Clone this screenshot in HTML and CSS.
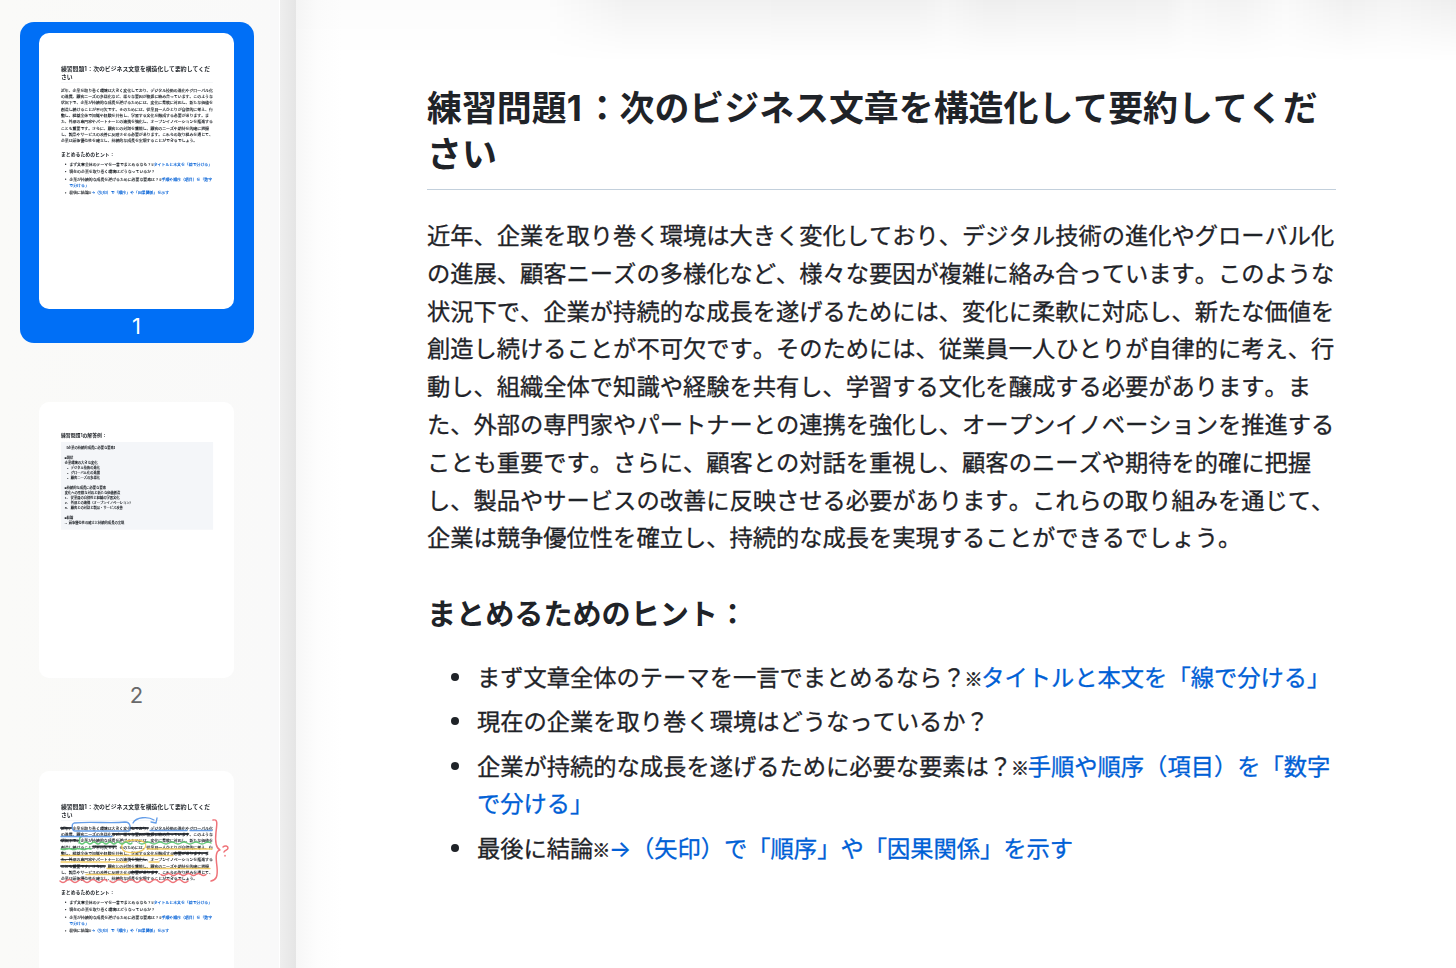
FILE: index.html
```html
<!DOCTYPE html>
<html lang="ja">
<head>
  <meta charset="UTF-8" />
  <meta name="viewport" content="width=device-width, initial-scale=1.0" />
  <title>練習問題1</title>
  <link rel="stylesheet" href="styles.css">
</head>
<body>
  <!-- Sidebar -->
  <aside class="sidebar">
    <div class="thumb selected">
      <div class="sheet">
        <div class="page">
          <h2>練習問題<span class="digit">1</span>：次のビジネス文章を構造化して要約してくだ<br>さい</h2>
          <p>近年、企業を取り巻く環境は大きく変化しており、デジタル技術の進化やグローバル化<br>の進展、顧客ニーズの多様化など、様々な要因が複雑に絡み合っています。このような<br>状況下で、企業が持続的な成長を遂げるためには、変化に柔軟に対応し、新たな価値を<br>創造し続けることが不可欠です。そのためには、従業員一人ひとりが自律的に考え、行<br>動し、組織全体で知識や経験を共有し、学習する文化を醸成する必要があります。ま<br>た、外部の専門家やパートナーとの連携を強化し、オープンイノベーションを推進する<br>ことも重要です。さらに、顧客との対話を重視し、顧客のニーズや期待を的確に把握<br>し、製品やサービスの改善に反映させる必要があります。これらの取り組みを通じて、<br>企業は競争優位性を確立し、持続的な成長を実現することができるでしょう。</p>
          <h3>まとめるためのヒント：</h3>
          <ul>
            <li>まず文章全体のテーマを一言でまとめるなら？<span class="mark">※</span><a>タイトルと本文を「線で分ける」</a></li>
            <li>現在の企業を取り巻く環境はどうなっているか？</li>
            <li>企業が持続的な成長を遂げるために必要な要素は？<span class="mark">※</span><a>手順や順序（項目）を「数字<br>で分ける」</a></li>
            <li>最後に結論<span class="mark">※</span><a><span class="arrow">→</span>（矢印）で「順序」や「因果関係」を示す</a></li>
          </ul>
        </div>
      </div>
      <span class="number">1</span>
    </div>

    <div class="thumb">
      <div class="sheet">
        <div class="page answer">
          <h3>練習問題1の解答例：</h3>
          <pre>【企業の持続的成長に必要な要素】

■現状
企業環境の大きな変化
 - デジタル技術の進化
 - グローバル化の進展
 - 顧客ニーズの多様化

■持続的な成長に必要な要素
変化への柔軟な対応と新たな価値創造
1. 従業員の自律性と組織の学習文化
2. 外部との連携（オープンイノベーション）
3. 顧客との対話と製品・サービス改善

■結論
→ 競争優位性の確立と持続的成長の実現</pre>
        </div>
      </div>
      <span class="number">2</span>
    </div>

    <div class="thumb">
      <div class="sheet">
        <div class="page">
          <h2>練習問題<span class="digit">1</span>：次のビジネス文章を構造化して要約してくだ<br>さい</h2>
          <p>近年、企業を取り巻く環境は大きく変化しており、デジタル技術の進化やグローバル化<br>の進展、顧客ニーズの多様化など、様々な要因が複雑に絡み合っています。このような<br>状況下で、企業が持続的な成長を遂げるためには、変化に柔軟に対応し、新たな価値を<br>創造し続けることが不可欠です。そのためには、従業員一人ひとりが自律的に考え、行<br>動し、組織全体で知識や経験を共有し、学習する文化を醸成する必要があります。ま<br>た、外部の専門家やパートナーとの連携を強化し、オープンイノベーションを推進する<br>ことも重要です。さらに、顧客との対話を重視し、顧客のニーズや期待を的確に把握<br>し、製品やサービスの改善に反映させる必要があります。これらの取り組みを通じて、<br>企業は競争優位性を確立し、持続的な成長を実現することができるでしょう。</p>
          <h3>まとめるためのヒント：</h3>
          <ul>
            <li>まず文章全体のテーマを一言でまとめるなら？<span class="mark">※</span><a>タイトルと本文を「線で分ける」</a></li>
            <li>現在の企業を取り巻く環境はどうなっているか？</li>
            <li>企業が持続的な成長を遂げるために必要な要素は？<span class="mark">※</span><a>手順や順序（項目）を「数字<br>で分ける」</a></li>
            <li>最後に結論<span class="mark">※</span><a><span class="arrow">→</span>（矢印）で「順序」や「因果関係」を示す</a></li>
          </ul>
        </div>
        <!-- Pen marks -->
        <svg class="ink" viewBox="0 0 195 276" fill="none" stroke-linecap="round" stroke-linejoin="round">
          <g stroke="#f3c74f" stroke-width="1.3" opacity=".85">
            <path d="M108 78H173M22 84.5H134M22 91H88M110 91H120M68 97.5H171M47 103.5H90"/>
            <path d="M84 79c-4-6 2-10 12-10s13 5 9 9-17 5-21 1Z"/>
          </g>
          <g stroke="#62c776" stroke-width="1.4">
            <path d="M42 66h-1l-1 6M41 72q2 2 4 0t4 0 4 0 4 0 4 0 4 0 4 0 4 0 4 0 4 0 4 0 4 0 4 0M100 72q3 2 6 0t6 0 6 0 6 0 6 0 6 0 6 0 6 0 6 0 6 0 6 0 6 0M22 78q3 1 5 0t5 0 5 0 5 0 5 0 5 0"/>
          </g>
          <g stroke="#659ee8" stroke-width="1.3">
            <path d="M90 60H36c-3 0-4-7-1-8 20-2 35 1 51-1 6 0 6 7 4 9M111 59.5h37M151 59.5h22M22 65.500h51M94 52c3-6 15-7 21-3"/>
            <path d="M112 51l5 1 1-5"/>
          </g>
          <g stroke="#11161d" stroke-width="2" opacity=".8">
            <path d="M22 57h10M92 57h17M74 63h75M22 69.500h17M54 75.500h23M135 82h33M22 95h44M92 101h26"/>
            <path d="M22 88.500h11M91 88.500h17" stroke-width="1.200"/>
          </g>
          <g stroke="#ef7379" stroke-width="1.5">
            <path d="M122 103.500q2.500 2 5 0t5 0 5 0 5 0 5 0 5 0 5 0 5 0 5 0M21 110q3 3 6 0t6 0 6 0 6 0 6 0 6 0 6 0 5 0M71 110q3 3 6 0t6 0 6 0 6 0 6 0 6 0 6 0 6 0 6 0 6 0 6 0 6 0 6 0"/>
            <path d="M174 49c5-1 4 4 3 12-1 9 0 16 4 18-5 1-4 9-3 17 1 10-1 13-6 14"/>
            <path d="M184 76c2-2 5-1 5 1s-3 2-4 4M186 84.500v.5"/>
          </g>
        </svg>
      </div>
    </div>
  </aside>
  <div class="divider"></div>

  <!-- Document -->
  <main class="viewer">
    <div class="toolbar-shade"></div>
    <div class="page">
      <h2>練習問題<span class="digit">1</span>：次のビジネス文章を構造化して要約してくだ<br>さい</h2>
      <p>近年、企業を取り巻く環境は大きく変化しており、デジタル技術の進化やグローバル化<br>の進展、顧客ニーズの多様化など、様々な要因が複雑に絡み合っています。このような<br>状況下で、企業が持続的な成長を遂げるためには、変化に柔軟に対応し、新たな価値を<br>創造し続けることが不可欠です。そのためには、従業員一人ひとりが自律的に考え、行<br>動し、組織全体で知識や経験を共有し、学習する文化を醸成する必要があります。ま<br>た、外部の専門家やパートナーとの連携を強化し、オープンイノベーションを推進する<br>ことも重要です。さらに、顧客との対話を重視し、顧客のニーズや期待を的確に把握<br>し、製品やサービスの改善に反映させる必要があります。これらの取り組みを通じて、<br>企業は競争優位性を確立し、持続的な成長を実現することができるでしょう。</p>
      <h3>まとめるためのヒント：</h3>
      <ul>
        <li>まず文章全体のテーマを一言でまとめるなら？<span class="mark">※</span><a>タイトルと本文を「線で分ける」</a></li>
        <li>現在の企業を取り巻く環境はどうなっているか？</li>
        <li>企業が持続的な成長を遂げるために必要な要素は？<span class="mark">※</span><a>手順や順序（項目）を「数字<br>で分ける」</a></li>
        <li>最後に結論<span class="mark">※</span><a><span class="arrow">→</span>（矢印）で「順序」や「因果関係」を示す</a></li>
      </ul>
    </div>
  </main>
</body>
</html>
```
FILE: styles.css
```css
* {
  box-sizing: border-box;
}

body {
  margin: 0;
  display: flex;
  height: 968px;
  overflow: hidden;
  background: #fff;
  color: #1f2328;
  font-family: "Inter", "Noto Sans CJK JP", sans-serif;
  font-kerning: none;
  text-spacing-trim: space-all;
}

/* Sidebar */
.sidebar {
  width: 280px;
  height: 968px;
  flex-shrink: 0;
  padding: 22px 0 0 19.5px;
  overflow: hidden;
  background: linear-gradient(90deg, #fafaf8, #f9f9f9);
  border-right: 1px solid #fff;
}

.thumb {
  width: 234px;
  height: 321px;
  margin-bottom: 48px;
  padding-top: 11px;
  border-radius: 14px;
  display: flex;
  flex-direction: column;
  align-items: center;
}

.thumb.selected {
  background: #006ff6;
}

.sheet {
  position: relative;
  width: 195px;
  height: 276px;
  flex-shrink: 0;
  overflow: hidden;
  border-radius: 10px;
  background: #fff;
}

.sheet .page {
  transform: scale(0.1674);
  transform-origin: 0 0;
  -webkit-text-stroke: 0.8px;
}

.number {
  font-size: 22px;
  line-height: 34px;
  color: #69696a;
}

.selected .number {
  color: #fff;
}

.ink {
  position: absolute;
  inset: 0;
  width: 195px;
  height: 276px;
}

.divider {
  width: 16px;
  flex-shrink: 0;
  background: linear-gradient(90deg, #eee, #e5e5e5);
}

/* Document viewer */
.viewer {
  position: relative;
  flex: 1;
  min-width: 0;
  height: 968px;
  overflow: hidden;
  background: linear-gradient(90deg, #f7f7f7, #fdfdfd 22px, #fff 46px);
}

.viewer .page {
  margin-top: -107px;
}

.toolbar-shade {
  position: absolute;
  top: 0;
  left: 0;
  right: 0;
  height: 62px;
  background: linear-gradient(90deg, rgba(0,0,0,.012) 250px, rgba(0,0,0,.055) 330px, rgba(0,0,0,.06) 620px, rgba(0,0,0,.045) 650px, rgba(0,0,0,.065) 690px, rgba(0,0,0,.055) 870px, rgba(0,0,0,.035) 890px, rgba(0,0,0,.05) 940px, rgba(0,0,0,.025) 990px, rgba(0,0,0,.06) 1050px, rgba(0,0,0,.045) 1100px, rgba(0,0,0,.065));
  -webkit-mask-image: linear-gradient(#000, rgba(0,0,0,.25) 70%, transparent);
  mask-image: linear-gradient(#000, rgba(0,0,0,.25) 70%, transparent);
}

/* Page content */
.page {
  width: 1165px;
  height: 1649px;
  padding: 192px 125px 0 131px;
  font-size: 23.28px;
  line-height: 37.8px;
  white-space: nowrap;
  -webkit-text-stroke: 0.3px;
}

.page h2 {
  margin: 0 0 27px;
  padding-bottom: 12px;
  border-bottom: 1px solid #c3d0dc;
  font-size: 34.92px;
  line-height: 46px;
  font-weight: 600;
  -webkit-text-stroke: 0;
}

.digit {
  display: inline-block;
  width: 18px;
  font-weight: 700;
}

.page p {
  margin: 0;
}

.page h3 {
  margin: 39px 0 25px;
  font-size: 29.1px;
  line-height: 38px;
  font-weight: 600;
  -webkit-text-stroke: 0;
}

.page ul {
  margin: 0;
  padding-left: 50px;
  list-style: none;
}

.page li + li {
  margin-top: 6.4px;
}

.page li::before {
  content: "";
  display: inline-block;
  width: 8px;
  height: 8px;
  margin: 0 18.5px 0 -26.5px;
  border-radius: 50%;
  background: #1f2328;
  vertical-align: 5px;
}

.page a {
  color: #0060d6;
}

.mark {
  display: inline-block;
  width: 15.7px;
  text-indent: -1px;
  font-family: "Noto Sans CJK JP", sans-serif;
  font-size: 18px;
  font-weight: 700;
  line-height: 1;
  -webkit-text-stroke: 0.5px;
}

.arrow {
  display: inline-block;
  width: 22px;
  line-height: 1;
}

.answer {
  padding-top: 180px;
}

.answer h3 {
  margin: 0 0 21px;
}

.answer pre {
  height: 524px;
  margin: 0;
  padding: 23px;
  background: #f4f6f9;
  font-family: "Liberation Mono", "Noto Sans CJK JP", monospace;
  font-size: 19.5px;
  line-height: 29.9px;
}
```
